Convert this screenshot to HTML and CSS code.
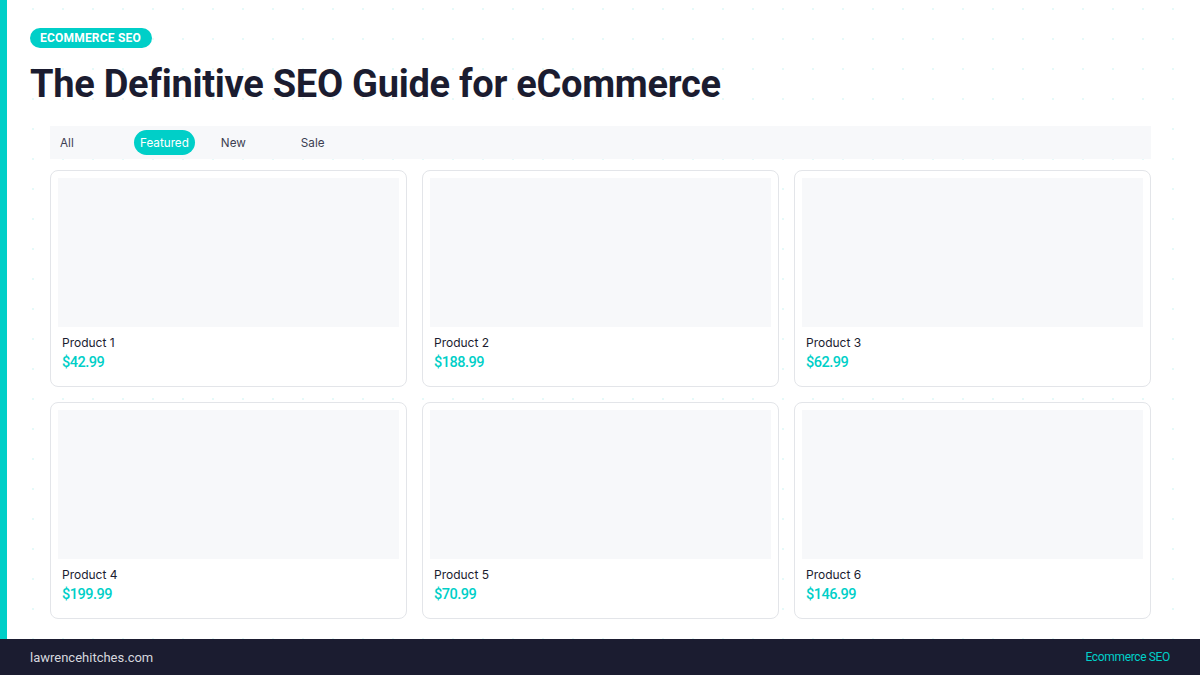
FILE: index.html
```html
<!DOCTYPE html>
<html lang="en">
<head>
<meta charset="utf-8">
<title>The Definitive SEO Guide for eCommerce</title>
<link rel="stylesheet" href="styles.css">
</head>
<body>
<div class="slide">
  <div class="accent"></div>
  <main class="content">
    <header class="head">
      <span class="badge">ECOMMERCE SEO</span>
      <h1 class="title">The Definitive SEO Guide for eCommerce</h1>
    </header>
    <section class="shop">
      <nav class="tabs">
        <span class="tab">All</span>
        <span class="tab active">Featured</span>
        <span class="tab">New</span>
        <span class="tab">Sale</span>
      </nav>
      <div class="grid">
        <div class="card"><div class="thumb"></div><div class="name">Product 1</div><div class="price">$42.99</div></div>
        <div class="card"><div class="thumb"></div><div class="name">Product 2</div><div class="price">$188.99</div></div>
        <div class="card"><div class="thumb"></div><div class="name">Product 3</div><div class="price">$62.99</div></div>
        <div class="card"><div class="thumb"></div><div class="name">Product 4</div><div class="price">$199.99</div></div>
        <div class="card"><div class="thumb"></div><div class="name">Product 5</div><div class="price">$70.99</div></div>
        <div class="card"><div class="thumb"></div><div class="name">Product 6</div><div class="price">$146.99</div></div>
      </div>
    </section>
  </main>
  <footer class="footer">
    <span class="site">lawrencehitches.com</span>
    <span class="topic">Ecommerce SEO</span>
  </footer>
</div>
</body>
</html>
```

FILE: styles.css
```css
* { box-sizing: border-box; }
html, body { margin: 0; padding: 0; }
body {
  width: 1200px;
  height: 675px;
  overflow: hidden;
  background: #ffffff;
  font-family: "Roboto", "Liberation Sans", sans-serif;
  color: #1b1c30;
}
.slide {
  position: relative;
  width: 1200px;
  height: 675px;
  display: flex;
  flex-direction: column;
  background-color: #ffffff;
  background-image: radial-gradient(circle, rgba(0, 206, 200, 0.10) 1px, transparent 1.5px);
  background-size: 30px 30px;
  background-position: -12px -6px;
}
.accent {
  position: absolute;
  left: 0;
  top: 0;
  width: 7px;
  height: 639px;
  background: #00cfc8;
}
.content {
  flex: 1;
  padding: 28px 49px 0 30px;
}
.head { display: flex; flex-direction: column; align-items: flex-start; }
.badge {
  display: inline-flex;
  align-items: center;
  height: 20px;
  padding: 0 11px 0 10px;
  border-radius: 10px;
  background: #00cfc8;
  color: #ffffff;
  font-family: "Roboto", sans-serif;
  font-weight: 700;
  font-size: 12px;
  letter-spacing: 0.2px;
}
.title {
  margin: 13px 0 0 0;
  font-family: "Roboto", sans-serif;
  font-weight: 700;
  font-size: 38px;
  line-height: 46px;
  letter-spacing: -0.28px;
  color: #1b1c30;
}
.shop {
  margin: 19px 0 0 20px;
}
.tabs {
  display: flex;
  align-items: center;
  gap: 20px;
  height: 33px;
  padding-left: 4px;
  background: #f7f8fa;
}
.tab {
  min-width: 60px;
  height: 25px;
  padding: 0 6px;
  display: inline-flex;
  align-items: center;
  border-radius: 13px;
  font-family: "Inter", sans-serif;
  font-size: 11.7px;
  color: #3d3f52;
}
.tab.active {
  background: #00cfc8;
  color: #ffffff;
}
.grid {
  margin-top: 11px;
  display: grid;
  grid-template-columns: repeat(3, 357px);
  grid-auto-rows: 217px;
  gap: 15px;
}
.card {
  border: 1px solid #e3e5e9;
  border-radius: 8px;
  padding: 7px;
  background: #ffffff;
}
.thumb {
  height: 149px;
  background: #f7f8fa;
}
.name {
  margin: 8px 0 0 4px;
  font-family: "Inter", sans-serif;
  font-size: 12px;
  line-height: 16px;
  color: #1b1c30;
}
.price {
  margin: 3px 0 0 4px;
  font-family: "Roboto", sans-serif;
  font-weight: 500;
  font-size: 14.5px;
  line-height: 18px;
  color: #00cfc8;
  letter-spacing: -0.5px;
}
.footer {
  height: 36px;
  flex: none;
  display: flex;
  align-items: center;
  justify-content: space-between;
  padding: 0 30px;
  background: #1b1c30;
}
.site {
  font-size: 13px;
  color: #d6d7de;
}
.topic {
  font-size: 12px;
  letter-spacing: -0.35px;
  color: #00cfc8;
}
```
